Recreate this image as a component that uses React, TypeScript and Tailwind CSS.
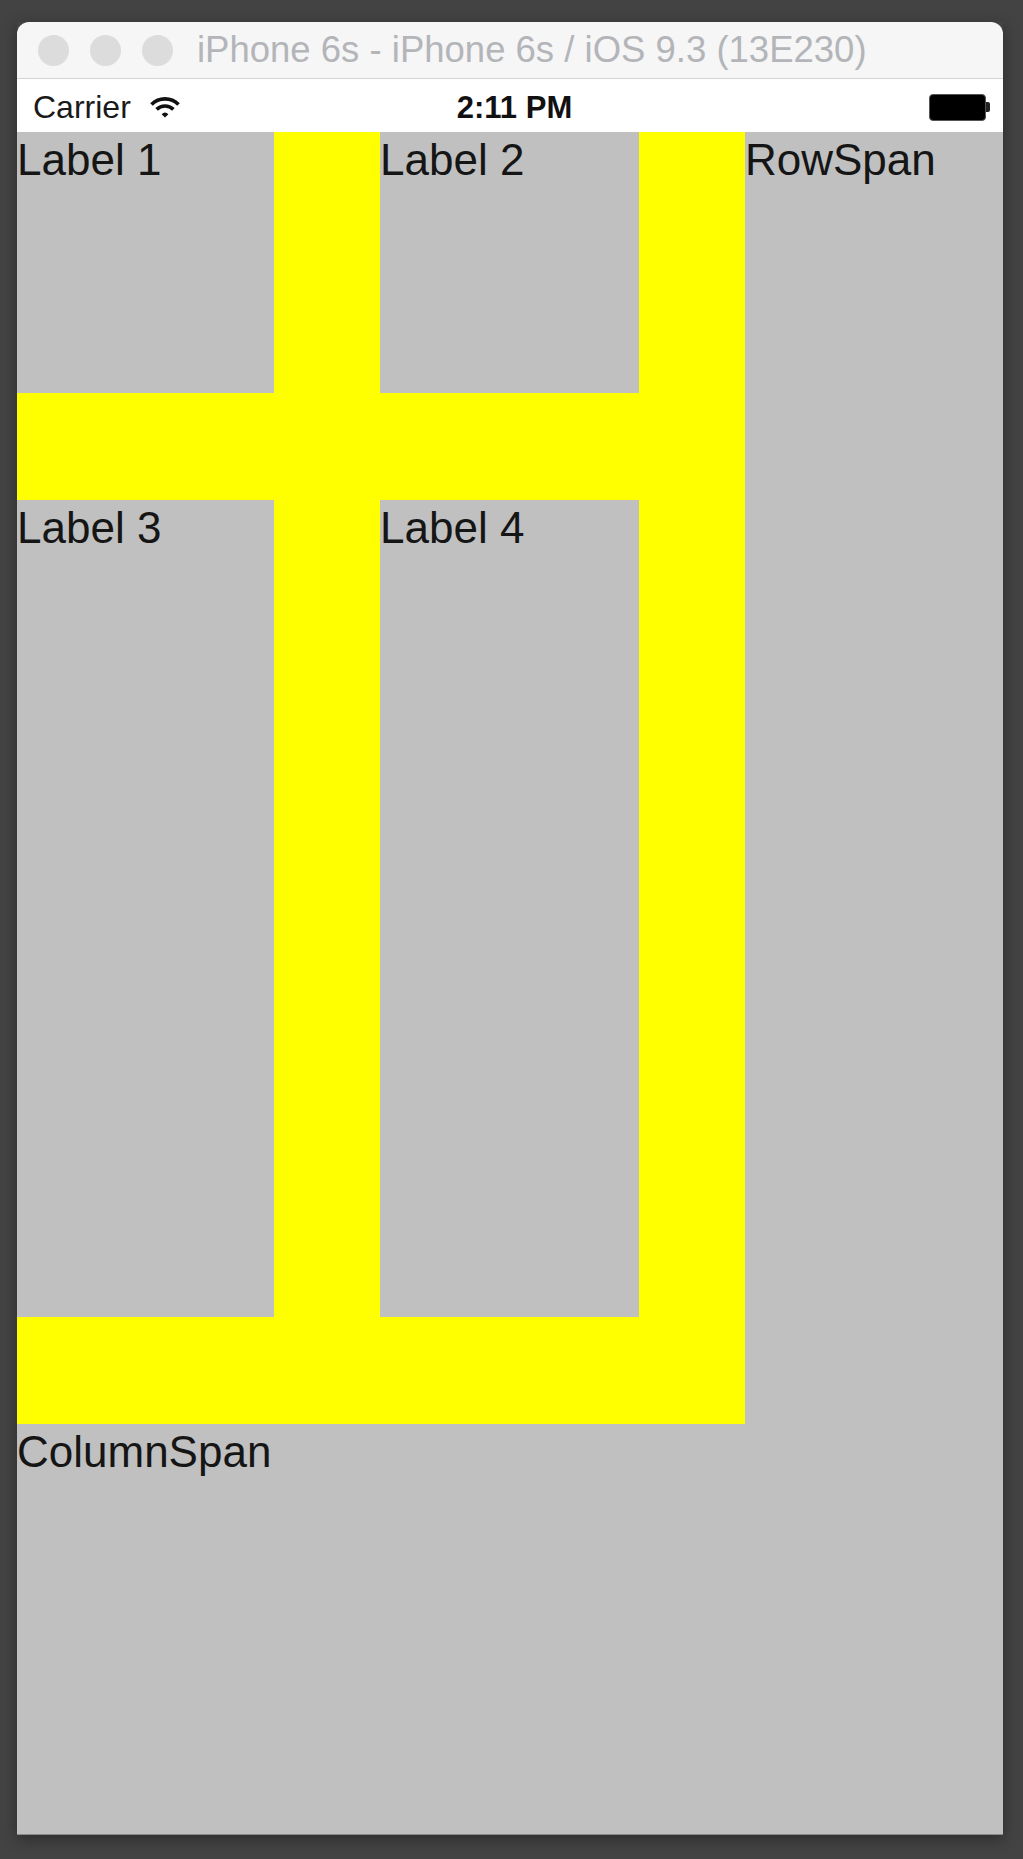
import React from 'react'

function Wifi() {
  return (
    <svg width="34" height="22" viewBox="0 0 34 22" className="block">
      <path d="M3.5 8.5 A19 19 0 0 1 30.5 8.5" fill="none" stroke="#111" strokeWidth="3.6" />
      <path d="M8.6 13.4 A12 12 0 0 1 25.4 13.4" fill="none" stroke="#111" strokeWidth="3.6" />
      <path d="M13.6 18.2 A5 5 0 0 1 20.4 18.2 L17 21.6 Z" fill="#111" />
    </svg>
  )
}

function Battery() {
  return (
    <div className="flex items-center">
      <div className="w-[57px] h-[27px] rounded-[4px] bg-black border border-[#555]" />
      <div className="w-[4px] h-[10px] rounded-r-[2px] bg-[#222]" />
    </div>
  )
}

function Cell({ text, className }: { text?: string; className: string }) {
  return (
    <div className={`bg-[#c0c0c0] text-[#151515] text-[44px] leading-[56px] whitespace-nowrap ${className}`}>
      {text}
    </div>
  )
}

export default function App() {
  return (
    <div
      className="w-[1023px] h-[1859px] bg-[#434343] pt-[22px] pl-[17px]"
      style={{ fontFamily: '"Liberation Sans", Arial, sans-serif' }}
    >
      <div className="w-[986px] shadow-[0_4px_14px_rgba(0,0,0,0.35)]">
        {/* title bar */}
        <div className="h-[57px] bg-[#f6f6f6] rounded-t-[12px] border-b border-[#d4d4d4] flex items-center pl-[21px]">
          <div className="flex gap-[21px]">
            <div className="w-[31px] h-[31px] rounded-full bg-[#dcdcdc]" />
            <div className="w-[31px] h-[31px] rounded-full bg-[#dcdcdc]" />
            <div className="w-[31px] h-[31px] rounded-full bg-[#dcdcdc]" />
          </div>
          <div className="ml-[24px] text-[36.5px] text-[#b3b5b9] leading-none whitespace-nowrap">
            iPhone 6s - iPhone 6s / iOS 9.3 (13E230)
          </div>
        </div>

        {/* status bar */}
        <div className="h-[53px] bg-white grid grid-cols-3 items-center pl-[16px] pr-[13px] pt-[3px]">
          <div className="flex items-center gap-[17px] text-[32px] text-[#1a1a1a] leading-none">
            <span>Carrier</span>
            <Wifi />
          </div>
          <div className="flex justify-center text-[31px] font-bold text-[#111] leading-none pl-[6px]">2:11 PM</div>
          <div className="flex justify-end">
            <Battery />
          </div>
        </div>

        {/* content grid */}
        <div className="grid grid-cols-[257px_106px_259px_106px_1fr] grid-rows-[261px_107px_817px_107px_410px] bg-[#c0c0c0] border-b border-[#8a8a8a]">
          <div className="col-start-1 col-end-5 row-start-1 row-end-5 bg-[#ffff00]" />
          <Cell text="Label 1" className="col-start-1 row-start-1" />
          <Cell text="Label 2" className="col-start-3 row-start-1" />
          <Cell text="Label 3" className="col-start-1 row-start-3" />
          <Cell text="Label 4" className="col-start-3 row-start-3" />
          <Cell text="RowSpan" className="col-start-5 row-start-1 row-end-5" />
          <Cell text="ColumnSpan" className="col-start-1 col-end-6 row-start-5" />
        </div>
      </div>
    </div>
  )
}
